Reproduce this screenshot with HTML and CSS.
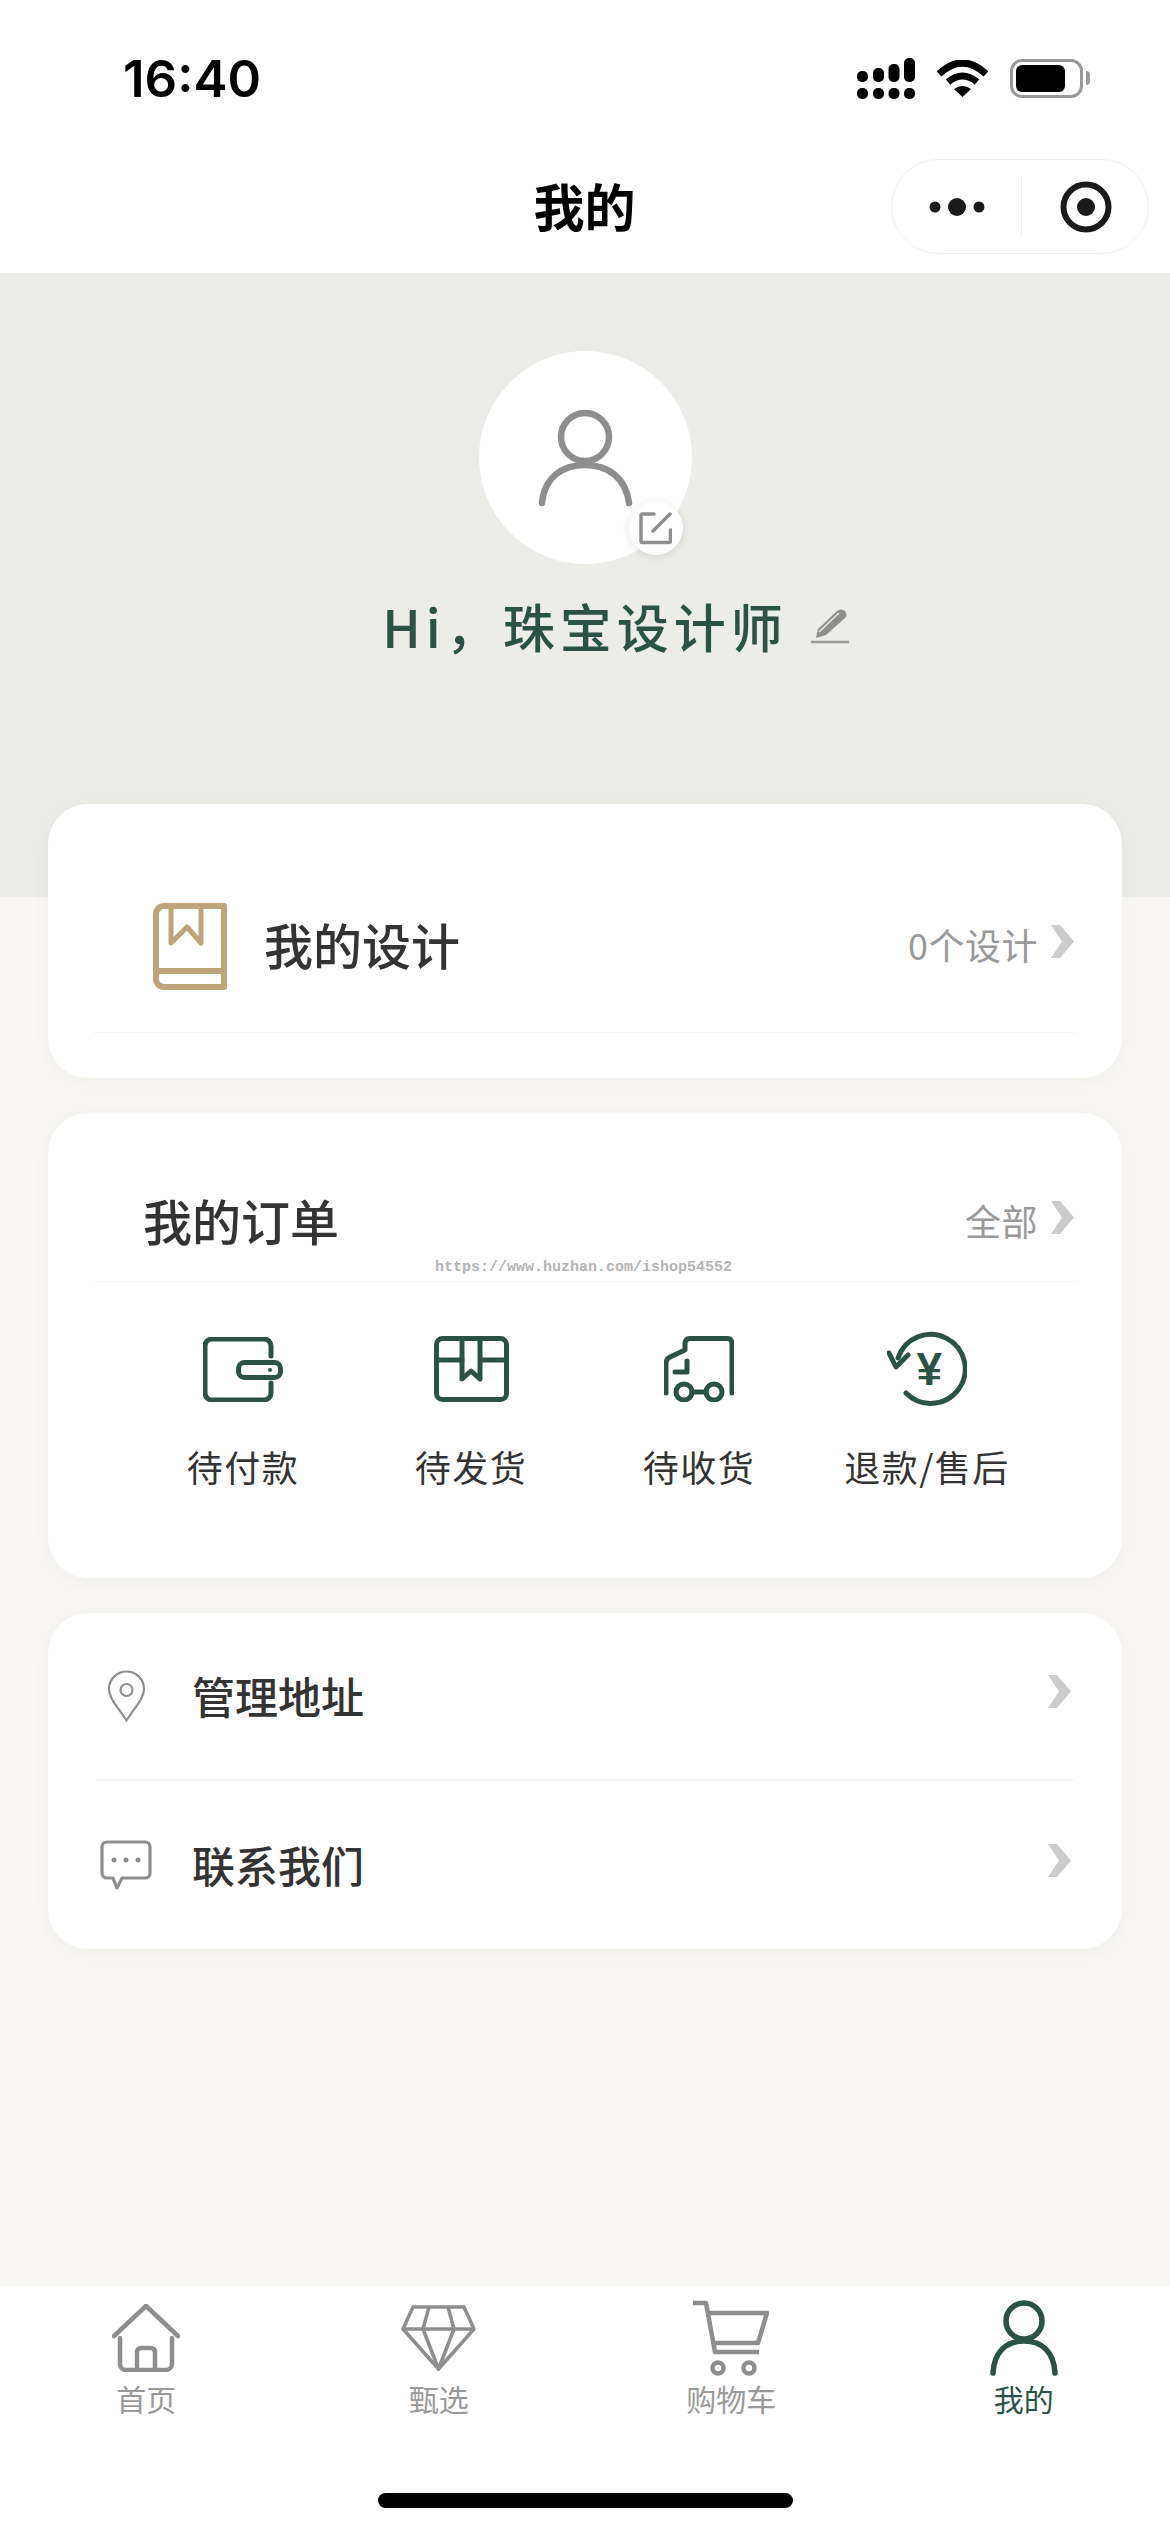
FILE: index.html
```html
<!DOCTYPE html>
<html lang="zh-CN">
<head>
  <meta charset="UTF-8">
  <title>我的</title>
  <meta name="viewport" content="width=device-width, initial-scale=1.0">
  <link rel="stylesheet" href="styles.css">
</head>
<body>
  <div class="status-bar">
    <span class="time">16:40</span>
    <div class="status-icons">
      <svg class="signal" width="58" height="41" viewBox="0 0 58 41" fill="#000">
        <rect x="0" y="13" width="11" height="11" rx="5"/>
        <rect x="16" y="10" width="11" height="14" rx="5"/>
        <rect x="31.5" y="6" width="11" height="18" rx="5"/>
        <rect x="47" y="0" width="11" height="24" rx="5"/>
        <rect x="0" y="30" width="11" height="11" rx="5"/>
        <rect x="16" y="30" width="11" height="11" rx="5"/>
        <rect x="31.5" y="30" width="11" height="11" rx="5"/>
        <rect x="47" y="30" width="11" height="11" rx="5"/>
      </svg>
      <svg class="wifi" width="51" height="37" viewBox="0 0 51 37">
        <path d="M2 14Q25.5 -8 49 14" fill="none" stroke="#000" stroke-width="7"/>
        <path d="M11 22Q25.5 10 40 22" fill="none" stroke="#000" stroke-width="7"/>
        <path d="M17 29Q25.5 23 34 29L25.5 37Z" fill="#000"/>
      </svg>
      <div class="battery"><div class="battery-fill"></div></div>
    </div>
  </div>

  <div class="navbar">
    <h1 class="nav-title">我的</h1>
    <div class="capsule">
      <svg class="capsule-dots" width="56" height="20" viewBox="0 0 56 20" fill="#1a1a1a">
        <circle cx="6" cy="10" r="5.5"/>
        <circle cx="28" cy="10" r="9"/>
        <circle cx="50" cy="10" r="5.5"/>
      </svg>
      <span class="capsule-line"></span>
      <svg class="capsule-target" width="52" height="52" viewBox="0 0 52 52">
        <circle cx="26" cy="26" r="22.5" fill="none" stroke="#1a1a1a" stroke-width="6"/>
        <circle cx="26" cy="26" r="9" fill="#1a1a1a"/>
      </svg>
    </div>
  </div>

  <div class="profile">
    <div class="avatar">
      <svg width="100" height="105" viewBox="0 0 100 105" fill="none" stroke="#8e8e8e" stroke-width="6.5" stroke-linecap="round">
        <circle cx="50" cy="32" r="24"/>
        <path d="M7 98C9 73 27 60 50 60C73 60 91 73 94 98"/>
      </svg>
      <div class="avatar-edit">
        <svg width="33" height="33" viewBox="0 0 33 33" fill="none" stroke="#8e8e8e" stroke-width="3.5" stroke-linecap="round">
          <path d="M15 2H3.5A1.5 1.5 0 0 0 2 3.5V29A1.5 1.5 0 0 0 3.5 30.5H30A1.5 1.5 0 0 0 31.5 29V18"/>
          <path d="M14 19L31 2"/>
        </svg>
      </div>
    </div>
    <div class="name-row">
      <span class="name">Hi，珠宝设计师</span>
      <svg class="name-pen" width="40" height="36" viewBox="0 0 40 36">
        <path d="M6 30L8 21L27 3Q31 0 35 3Q38 7 35 10L16 27Z" fill="#8e8e8e"/>
        <path d="M9 24L29 5" stroke="#ecece8" stroke-width="1.5"/>
        <path d="M1 34H39" stroke="#999" stroke-width="2.5"/>
      </svg>
    </div>
  </div>

  <div class="main">
    <div class="card">
      <div class="design-row">
        <svg width="74" height="87" viewBox="0 0 74 87" fill="none" stroke="#bfa37a" stroke-width="6" stroke-linejoin="round">
          <path d="M11 3H71V84H11A8 8 0 0 1 3 76V11A8 8 0 0 1 11 3Z"/>
          <path d="M3 68H71"/>
          <path d="M18 3V40L34 24L48 40V3" stroke-width="5"/>
        </svg>
        <span class="design-title">我的设计</span>
        <span class="more-text">0个设计</span>
        <svg class="chevron" width="25" height="33" viewBox="0 0 25 33"><polygon points="1,0 10,0 24,16.5 10,33 1,33 12,16.5"/></svg>
      </div>
    </div>

    <div class="card order-card">
      <div class="order-head">
        <span class="order-title">我的订单</span>
        <span class="more-text">全部</span>
        <svg class="chevron" width="25" height="33" viewBox="0 0 25 33"><polygon points="1,0 10,0 24,16.5 10,33 1,33 12,16.5"/></svg>
      </div>
      <span class="watermark">https://www.huzhan.com/ishop54552</span>
      <div class="order-grid">
        <div class="order-item">
          <div class="order-icon">
            <svg width="80" height="65" viewBox="0 0 80 65" fill="none" stroke="#2b5246" stroke-width="5" stroke-linecap="round">
              <path d="M68 19V9A7 7 0 0 0 61 2H9A7 7 0 0 0 2 9V56A7 7 0 0 0 9 63H61A7 7 0 0 0 68 56V46"/>
              <rect x="35.5" y="25.5" width="42" height="15" rx="6"/>
              <circle cx="67" cy="33" r="2" fill="#2b5246" stroke="none"/>
            </svg>
          </div>
          <span>待付款</span>
        </div>
        <div class="order-item">
          <div class="order-icon">
            <svg width="75" height="66" viewBox="0 0 75 66" fill="none" stroke="#2b5246" stroke-width="5" stroke-linecap="round" stroke-linejoin="round">
              <rect x="2.5" y="2.5" width="70" height="61" rx="6"/>
              <path d="M3 24H28M47 24H72"/>
              <path d="M28 3V43L37 35L46 43V3"/>
            </svg>
          </div>
          <span>待发货</span>
        </div>
        <div class="order-item">
          <div class="order-icon">
            <svg width="70" height="66" viewBox="0 0 70 66" fill="none" stroke="#2b5246" stroke-width="5" stroke-linecap="round" stroke-linejoin="round">
              <path d="M2 57V27Q2 23 6 21L21 14V8Q21 2.5 26 2.5H63Q68 2.5 68 8V57"/>
              <path d="M23 25V36H11"/>
              <circle cx="20" cy="56" r="8"/>
              <circle cx="50" cy="56" r="8"/>
              <path d="M28 56H42"/>
            </svg>
          </div>
          <span>待收货</span>
        </div>
        <div class="order-item">
          <div class="order-icon">
            <svg width="80" height="76" viewBox="0 0 80 76" fill="none" stroke="#2b5246" stroke-width="5" stroke-linecap="round" stroke-linejoin="round">
              <path d="M19 62A34.5 34.5 0 1 0 11 27"/>
              <path d="M2 22L9 36L21 24"/>
              <text class="yen" x="43" y="54" text-anchor="middle" stroke="none" fill="#2b5246">¥</text>
            </svg>
          </div>
          <span>退款/售后</span>
        </div>
      </div>
    </div>

    <div class="card">
      <div class="menu-row">
        <div class="menu-icon">
          <svg width="39" height="52" viewBox="0 0 39 52" fill="none" stroke="#8e8e8e" stroke-width="2.2">
            <path d="M19.5 50.5C10 36 2 28 2 19A17.5 17.5 0 0 1 37 19C37 28 29 36 19.5 50.5Z"/>
            <circle cx="19.5" cy="20" r="6"/>
          </svg>
        </div>
        <span class="menu-title">管理地址</span>
        <svg class="chevron" width="25" height="33" viewBox="0 0 25 33"><polygon points="1,0 10,0 24,16.5 10,33 1,33 12,16.5"/></svg>
      </div>
      <div class="menu-row">
        <div class="menu-icon">
          <svg width="52" height="50" viewBox="0 0 52 50" fill="none" stroke="#8e8e8e" stroke-width="3.2" stroke-linejoin="round">
            <path d="M7 2H45A5 5 0 0 1 50 7V33A5 5 0 0 1 45 38H22L17 48L13 38H7A5 5 0 0 1 2 33V7A5 5 0 0 1 7 2Z"/>
            <circle cx="14" cy="20" r="2.5" fill="#8e8e8e" stroke="none"/>
            <circle cx="26" cy="20" r="2.5" fill="#8e8e8e" stroke="none"/>
            <circle cx="38" cy="20" r="2.5" fill="#8e8e8e" stroke="none"/>
          </svg>
        </div>
        <span class="menu-title">联系我们</span>
        <svg class="chevron" width="25" height="33" viewBox="0 0 25 33"><polygon points="1,0 10,0 24,16.5 10,33 1,33 12,16.5"/></svg>
      </div>
    </div>
  </div>

  <div class="tabbar">
    <div class="tabs">
      <div class="tab">
        <div class="tab-icon">
          <svg width="68" height="68" viewBox="0 0 68 68" fill="none" stroke="#8e8e8e" stroke-width="4.5" stroke-linecap="round" stroke-linejoin="round">
            <path d="M2 32L34 2L66 32"/>
            <path d="M8 34V60A6 6 0 0 0 14 66H54A6 6 0 0 0 60 60V34"/>
            <path d="M25 65V48A4 4 0 0 1 29 44H39A4 4 0 0 1 43 48V65"/>
          </svg>
        </div>
        <span>首页</span>
      </div>
      <div class="tab">
        <div class="tab-icon">
          <svg width="75" height="66" viewBox="0 0 75 66" fill="none" stroke="#8e8e8e" stroke-width="3.5" stroke-linejoin="round">
            <path d="M12 2H63L73 24L37.5 64L2 24Z"/>
            <path d="M2 24H73"/>
            <path d="M28 2L22 24L37.5 64L53 24L47 2"/>
          </svg>
        </div>
        <span>甄选</span>
      </div>
      <div class="tab">
        <div class="tab-icon">
          <svg width="76" height="76" viewBox="0 0 76 76" fill="none" stroke="#8e8e8e" stroke-width="4.5" stroke-linejoin="round">
            <path d="M0 3H13L22 52H66"/>
            <path d="M15 13H74L65 43H20"/>
            <circle cx="25" cy="68" r="5.5"/>
            <circle cx="56" cy="68" r="5.5"/>
          </svg>
        </div>
        <span>购物车</span>
      </div>
      <div class="tab tab-active">
        <div class="tab-icon">
          <svg width="70" height="76" viewBox="0 0 70 76" fill="none" stroke="#2b5246" stroke-width="5.5" stroke-linecap="round">
            <circle cx="35" cy="21" r="18"/>
            <path d="M4 73C5 52 17 41 35 41C53 41 65 52 66 73"/>
          </svg>
        </div>
        <span>我的</span>
      </div>
    </div>
    <div class="home-bar"></div>
  </div>
</body>
</html>
```

FILE: styles.css
```css
* {
  box-sizing: border-box;
}

body {
  margin: 0;
  width: 1170px;
  height: 2532px;
  display: flex;
  flex-direction: column;
  background: #f8f7f3;
  color: #333;
  font-family: "Noto Sans CJK SC", "Liberation Sans", sans-serif;
}

/* Status bar */
.status-bar {
  height: 150px;
  padding: 6px 87px 0 123px;
  display: flex;
  align-items: center;
  justify-content: space-between;
  background: #fff;
}

.time {
  font-family: Inter, "Liberation Sans", sans-serif;
  font-size: 51px;
  font-weight: 600;
  color: #000;
}

.status-icons {
  display: flex;
  align-items: center;
  gap: 22px;
}

.battery {
  position: relative;
  width: 73px;
  height: 39px;
  padding: 3px;
  border: 3px solid #999;
  border-radius: 12px;
}

.battery::after {
  content: "";
  position: absolute;
  left: 73px;
  top: 9px;
  width: 4px;
  height: 14px;
  border-radius: 0 4px 4px 0;
  background: #999;
}

.battery-fill {
  width: 49px;
  height: 27px;
  border-radius: 6px;
  background: #000;
}

/* Nav */
.navbar {
  height: 123px;
  padding: 0 21px 10px 0;
  display: grid;
  grid-template-columns: 1fr auto 1fr;
  align-items: center;
  background: #fff;
}

.nav-title {
  grid-column: 2;
  margin: 0 0 4px;
  font-size: 51px;
  font-weight: 700;
  line-height: 60px;
  color: #000;
  transform: translateX(10px);
}

.capsule {
  grid-column: 3;
  justify-self: end;
  width: 258px;
  height: 95px;
  display: flex;
  align-items: center;
  padding-left: 37px;
  border: 1px solid #f0f0f0;
  border-radius: 48px;
}

.capsule-line {
  width: 1px;
  height: 59px;
  margin: 0 38px 0 36px;
  background: #eee;
}

/* Profile */
.profile {
  height: 624px;
  padding-top: 78px;
  display: flex;
  flex-direction: column;
  align-items: center;
  background: #ecece8;
}

.avatar {
  position: relative;
  width: 213px;
  height: 213px;
  display: flex;
  align-items: center;
  justify-content: center;
  border-radius: 50%;
  background: #fff;
}

.avatar-edit {
  position: absolute;
  left: 150px;
  top: 150px;
  width: 54px;
  height: 54px;
  display: flex;
  align-items: center;
  justify-content: center;
  border-radius: 50%;
  background: #fff;
  box-shadow: 0 2px 8px rgba(0, 0, 0, 0.1);
}

.name-row {
  margin-top: 27px;
  display: flex;
  align-items: center;
}

.name {
  font-size: 52px;
  font-weight: 500;
  line-height: 70px;
  letter-spacing: 5px;
  color: #2b5246;
}

.name-pen {
  margin: 0 -62px 0 22px;
}

/* Cards */
.main {
  flex: 1;
  margin-top: -93px;
  padding: 0 48px;
  display: flex;
  flex-direction: column;
  gap: 35px;
}

.card {
  padding: 0 46px 0 45px;
  border-radius: 40px;
  background: #fff;
  box-shadow: 0 4px 24px rgba(60, 50, 30, 0.04);
}

.chevron {
  fill: #ccc;
  margin-bottom: 9px;
}

.more-text {
  margin-left: auto;
  margin-right: 12px;
  margin-bottom: 5px;
  font-size: 36px;
  line-height: 50px;
  letter-spacing: 0.5px;
  color: #999;
}

.design-row {
  height: 229px;
  margin-bottom: 45px;
  padding: 56px 1px 0 60px;
  display: flex;
  align-items: center;
  border-bottom: 1px solid #f7f7f7;
}

.design-title {
  margin-left: 37px;
  margin-bottom: 5px;
  font-size: 49px;
  font-weight: 500;
  line-height: 60px;
}

.order-card {
  position: relative;
}

.order-head {
  height: 169px;
  padding: 50px 1px 0 50px;
  display: flex;
  align-items: center;
  border-bottom: 1px solid #f7f7f7;
}

.order-title {
  margin-bottom: 5px;
  font-size: 49px;
  font-weight: 500;
  line-height: 60px;
}

.watermark {
  position: absolute;
  left: 387px;
  top: 146px;
  font-family: "Liberation Mono", monospace;
  font-size: 15px;
  font-weight: 700;
  line-height: 18px;
  color: #b4b4b4;
}

.order-grid {
  padding: 49px 35px 87px 36px;
  display: grid;
  grid-template-columns: repeat(4, 1fr);
}

.order-item {
  display: flex;
  flex-direction: column;
  align-items: center;
  gap: 34px;
  font-size: 36px;
  line-height: 50px;
  letter-spacing: 1.5px;
}

.order-icon {
  height: 76px;
  display: flex;
  align-items: center;
}

.yen {
  font-family: "Liberation Sans", sans-serif;
  font-size: 46px;
  font-weight: 700;
}

.menu-row {
  height: 166px;
  padding-right: 2px;
  margin: 0 2px 0 3px;
  display: flex;
  align-items: center;
}

.menu-row + .menu-row {
  height: 170px;
  border-top: 2px solid #f7f7f7;
}

.menu-icon {
  width: 60px;
  display: flex;
  justify-content: center;
}

.menu-title {
  flex: 1;
  margin-left: 36px;
  margin-bottom: 3px;
  font-size: 43px;
  font-weight: 500;
  line-height: 56px;
}

/* Tab bar */
.tabbar {
  height: 246px;
  padding-top: 14px;
  background: #fff;
}

.tabs {
  display: grid;
  grid-template-columns: repeat(4, 1fr);
}

.tab {
  display: flex;
  flex-direction: column;
  align-items: center;
  gap: 2px;
  font-size: 30px;
  line-height: 40px;
  color: #999;
}

.tab-active {
  color: #2b5246;
}

.tab-icon {
  height: 76px;
  display: flex;
  align-items: center;
}

.home-bar {
  width: 415px;
  height: 15px;
  margin: 75px auto 0;
  border-radius: 8px;
  background: #000;
}
```
